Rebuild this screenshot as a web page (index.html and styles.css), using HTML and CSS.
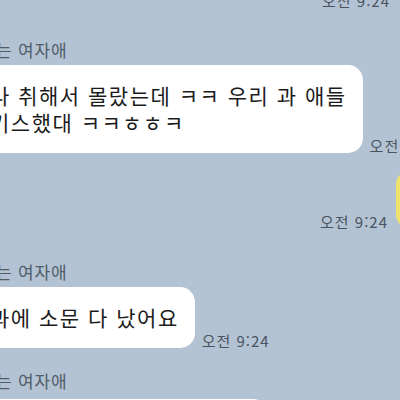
FILE: index.html
```html
<!DOCTYPE html>
<html lang="ko">
<head>
<meta charset="utf-8">
<link rel="stylesheet" href="styles.css">
</head>
<body>
<div class="chat">
  <div class="line out top">
    <span class="time">오전 9:24</span>
  </div>

  <div class="group in g1">
    <div class="name">는 여자애</div>
    <div class="line">
      <div class="bubble">나 취해서 몰랐는데 ㅋㅋ 우리 과 애들<br>키스했대 ㅋㅋㅎㅎㅋ</div>
      <span class="time">오전 9:24</span>
    </div>
  </div>

  <div class="line out mine">
    <span class="time">오전 9:24</span>
    <div class="bubble yellow"></div>
  </div>

  <div class="group in g2">
    <div class="name">는 여자애</div>
    <div class="line">
      <div class="bubble">과에 소문 다 났어요</div>
      <span class="time">오전 9:24</span>
    </div>
  </div>

  <div class="group in g3">
    <div class="name">는 여자애</div>
    <div class="line">
      <div class="bubble wide"></div>
    </div>
  </div>
</div>
</body>
</html>
```

FILE: styles.css
```css
html, body {
  margin: 0;
  padding: 0;
}

body {
  width: 400px;
  height: 400px;
  overflow: hidden;
  background: #b3c3d4;
  font-family: "Noto Sans CJK KR", "Noto Sans", sans-serif;
}

.chat {
  display: flex;
  flex-direction: column;
  margin-top: -8px;
}

.line {
  display: flex;
  align-items: flex-end;
  gap: 7px;
  white-space: nowrap;
}

.line.out {
  justify-content: flex-end;
}

.top {
  margin-right: 10px;
}

.group.in {
  display: flex;
  flex-direction: column;
  gap: 5px;
  margin-left: -22px;
}

.g1 { margin-top: 31px; }
.g2 { margin-top: 32px; }
.g3 { margin-top: 22px; }
.g3 .line { margin-top: 3px; }

.name {
  font-size: 17px;
  line-height: 21px;
  letter-spacing: 0.8px;
  color: #525c67;
  padding-left: 18px;
}

.bubble {
  background: #ffffff;
  color: #1c1c1c;
  font-size: 21px;
  line-height: 27px;
  letter-spacing: 1.5px;
  padding: 17px 16px 17px 12px;
  border-radius: 15px;
  flex-shrink: 0;
}

.bubble.wide {
  width: 262px;
  height: 30px;
}

.time {
  font-size: 15px;
  line-height: 18px;
  letter-spacing: 1px;
  color: #4a5360;
  flex-shrink: 0;
  margin-bottom: -2px;
}

.mine {
  margin-top: 17px;
  margin-right: -96px;
  gap: 8px;
}

.bubble.yellow {
  background: #efe36c;
  padding: 0;
  width: 100px;
  height: 59px;
}
```
